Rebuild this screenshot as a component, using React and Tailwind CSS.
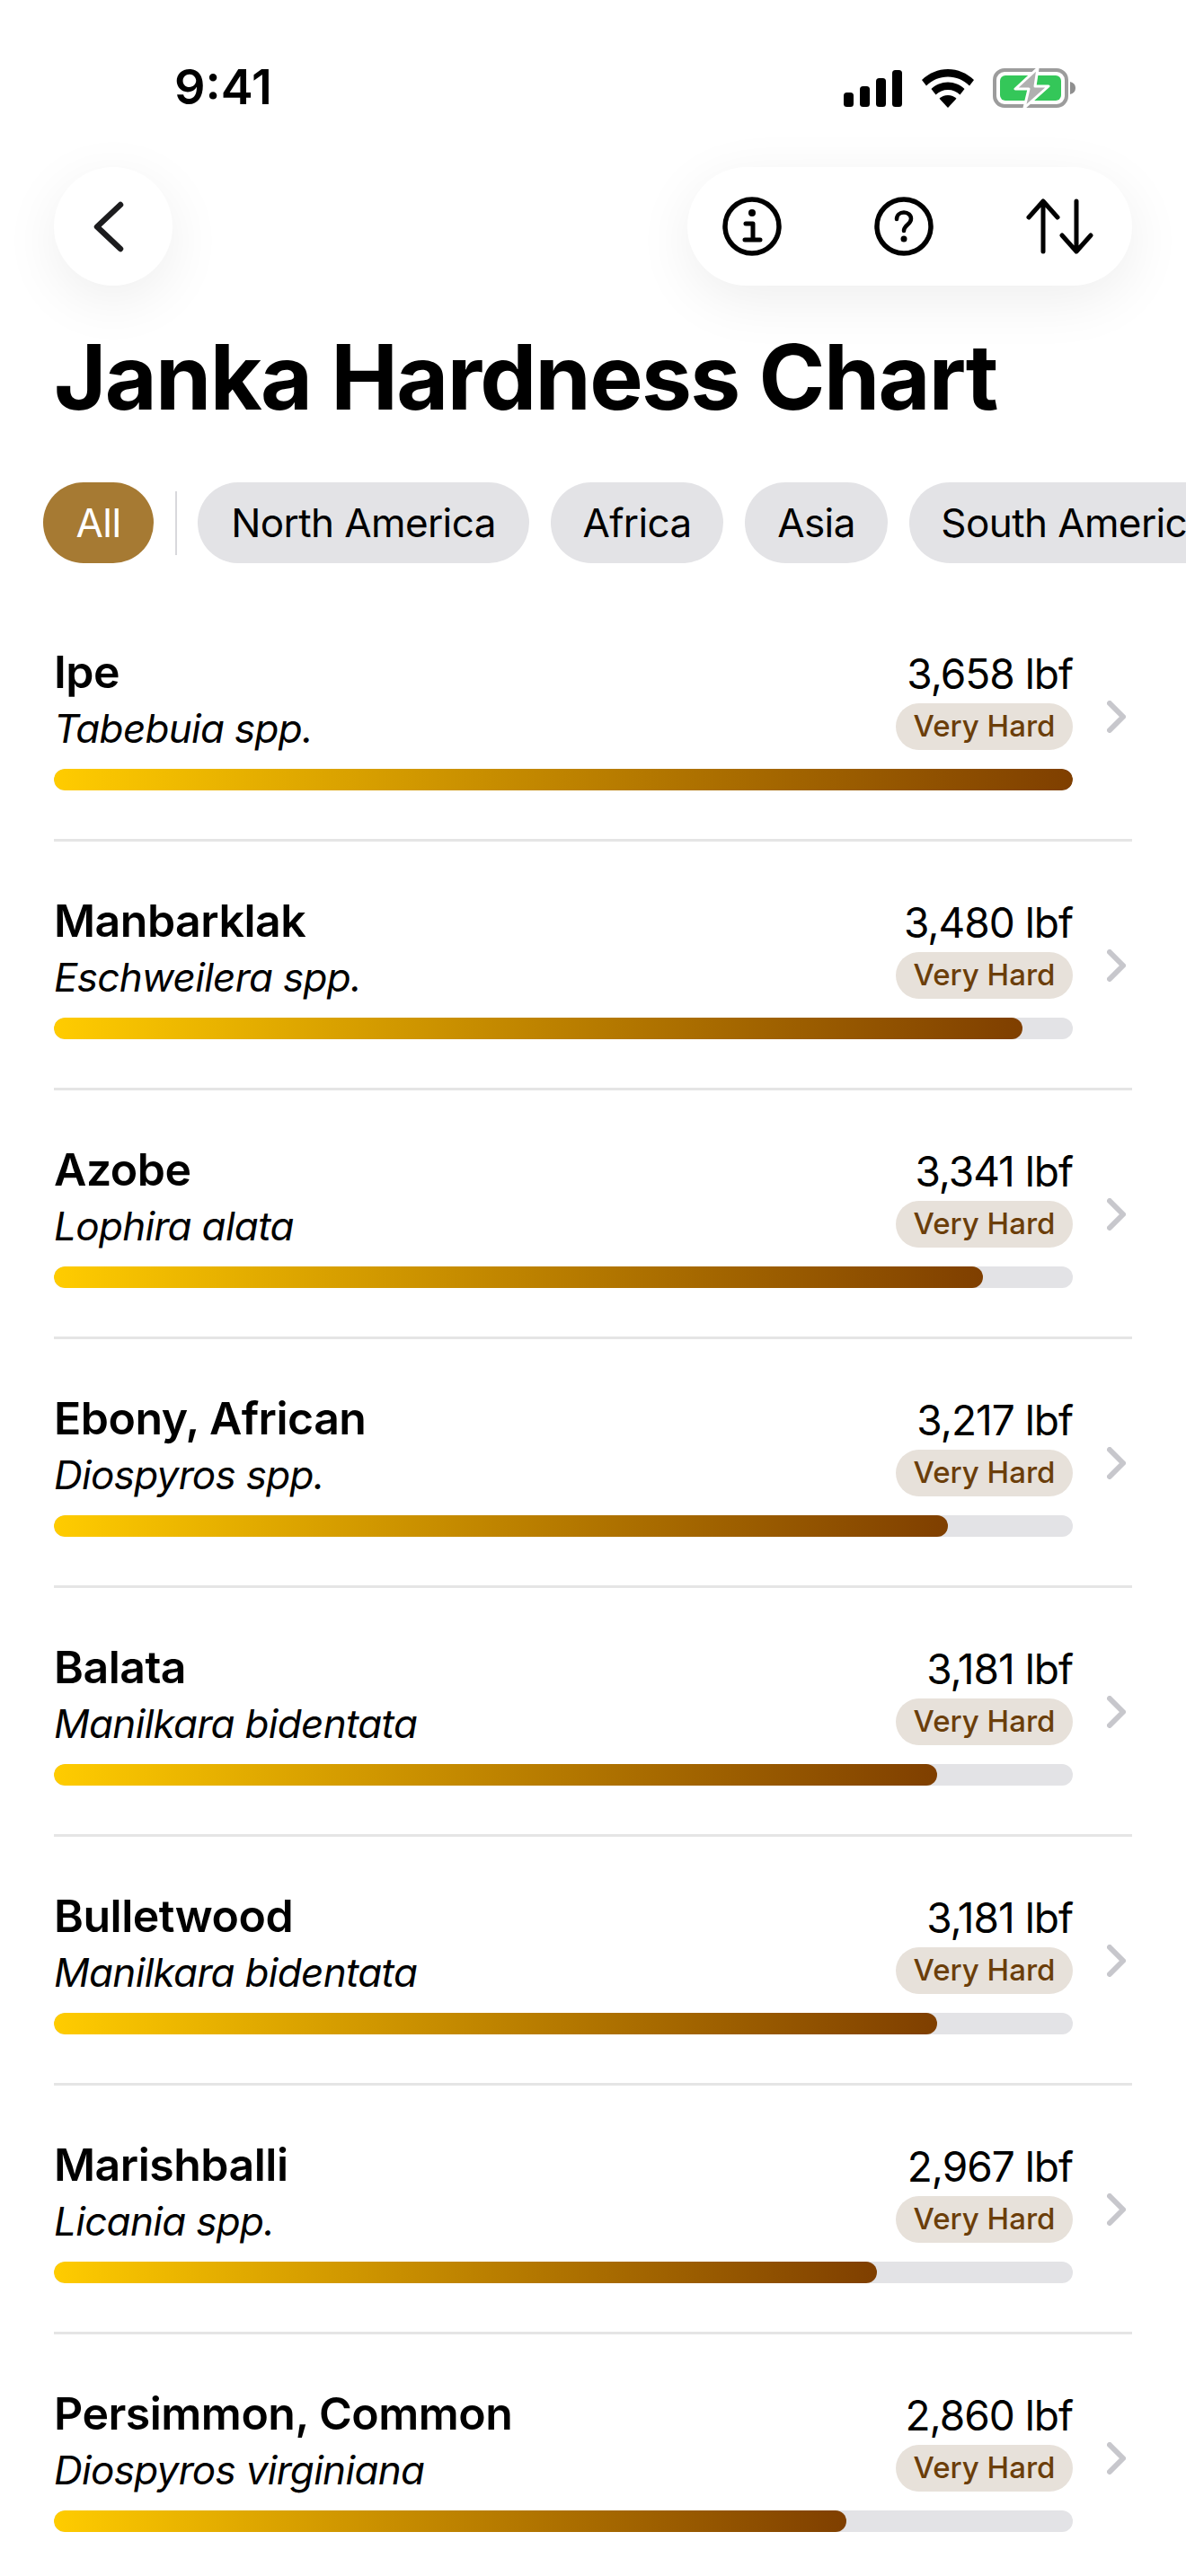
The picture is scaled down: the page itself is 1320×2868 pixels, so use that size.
import React from 'react';

const woods = [
    { name: 'Ipe', latin: 'Tabebuia spp.', lbf: 3658 },
    { name: 'Manbarklak', latin: 'Eschweilera spp.', lbf: 3480 },
    { name: 'Azobe', latin: 'Lophira alata', lbf: 3341 },
    { name: 'Ebony, African', latin: 'Diospyros spp.', lbf: 3217 },
    { name: 'Balata', latin: 'Manilkara bidentata', lbf: 3181 },
    { name: 'Bulletwood', latin: 'Manilkara bidentata', lbf: 3181 },
    { name: 'Marishballi', latin: 'Licania spp.', lbf: 2967 },
    { name: 'Persimmon, Common', latin: 'Diospyros virginiana', lbf: 2860 },
];

const regions = [
    { name: 'North America', width: 'w-[369px]' },
    { name: 'Africa', width: 'w-[192px]' },
    { name: 'Asia', width: 'w-[159px]' },
    { name: 'South America', width: 'w-[369px]' },
];

const StatusIcons = () => (
    <div className="flex items-center mt-[7px] gap-[22px]">
        <svg width="65" height="41" viewBox="0 0 65 41" fill="#000">
            <rect x="0" y="25" width="11" height="16" rx="3.5" />
            <rect x="18" y="18" width="11" height="23" rx="3.5" />
            <rect x="36" y="9" width="11" height="32" rx="3.5" />
            <rect x="54" y="0" width="11" height="41" rx="3.5" />
        </svg>
        <svg width="58" height="43" viewBox="0 0 58 43" fill="#000">
            <path d="M29 0C18 0 8 4.400 0 12l5 6.500C11.500 12 20 8.500 29 8.500S46.500 12 53 18.500l5-6.500C50 4.400 40 0 29 0z" />
            <path d="M29 14.500c-7 0-13.500 2.800-18.500 7.500l5 6.500c3.500-3.500 8.400-5.500 13.500-5.500s10 2 13.500 5.500l5-6.500C42.500 17.300 36 14.500 29 14.500z" />
            <path d="M29 29c-3.800 0-7.200 1.400-9.500 3.700L29 43l9.500-10.300C36.200 30.400 32.800 29 29 29z" />
        </svg>
        <svg width="93" height="46" viewBox="0 0 93 46" className="-ml-[1px]">
            <rect x="2" y="3" width="80" height="40" rx="11" fill="none" stroke="#9c9c9c" strokeWidth="4" />
            <rect x="8" y="9" width="68" height="28" rx="6" fill="#34c759" />
            <path d="M86 16c4 1 6 3.500 6 7s-2 6-6 7z" fill="#8f8f8f" />
            <path d="M50 1L25 24h15l-5 21 27-24H47z" fill="#b0b0b0" stroke="#fff" strokeWidth="3" strokeLinejoin="round" />
        </svg>
    </div>
);

const InfoIcon = () => (
    <svg width="66" height="66" viewBox="0 0 66 66" fill="none" stroke="#000" strokeWidth="5" strokeLinecap="round" strokeLinejoin="round">
        <circle cx="33" cy="33" r="30" strokeWidth="5.500" />
        <circle cx="33" cy="18" r="4" fill="#000" stroke="none" />
        <path d="M26 30h8v18M25 48h17" />
    </svg>
);

const HelpIcon = () => (
    <svg width="66" height="66" viewBox="0 0 66 66" fill="none" stroke="#000" strokeWidth="5" strokeLinecap="round" strokeLinejoin="round">
        <circle cx="33" cy="33" r="30" strokeWidth="5.500" />
        <path d="M25 25c0-4.500 3.500-7.500 8-7.500s8 3 8 7c0 6.500-8 7-8 13.500" strokeWidth="4.500" />
        <circle cx="33" cy="47" r="3.500" fill="#000" stroke="none" />
    </svg>
);

const SortIcon = () => (
    <svg width="76" height="62" viewBox="0 0 76 62" fill="none" stroke="#000" strokeWidth="5" strokeLinecap="round" strokeLinejoin="round">
        <path d="M19 3v56M3 21L19 3l16 18" />
        <path d="M56 3v56M40 41l16 18 16-18" />
    </svg>
);

const WoodRow = ({ wood }) => {
    const fill = ((wood.lbf - 67) / (3658 - 67)) * 100;
    return (
        <div className="flex items-center pt-[58px] pb-[54px] border-b-[3px] border-[#e5e5e5]">
            <div className="w-[1134px]">
                <div className="flex justify-between h-[117px]">
                    <div>
                        <p className="text-[50px] leading-[60px] font-semibold tracking-[-0.5px] text-black">{wood.name}</p>
                        <p className="mt-[5px] text-[44px] leading-[56px] italic tracking-[-0.7px] text-black">{wood.latin}</p>
                    </div>
                    <div className="flex flex-col items-end pt-[4px]">
                        <p className="text-[46px] leading-[56px] tracking-[-1px] text-black">{wood.lbf.toLocaleString('en-US')} lbf</p>
                        <span className="mt-[5px] h-[52px] w-[197px] flex items-center justify-center rounded-full bg-[#e7e1da] text-[33px] font-medium text-[#6b3e0a]">
                            Very Hard
                        </span>
                    </div>
                </div>
                <div className="mt-[21px] h-[24px] rounded-full bg-[#e3e3e6] overflow-hidden">
                    <div
                        className="h-full rounded-full bg-gradient-to-r from-[#ffcc00] to-[#7f3f00]"
                        style={{ width: `${fill}%` }}
                    />
                </div>
            </div>
            <svg width="21" height="36" viewBox="0 0 21 36" fill="none" stroke="#c7c7cc" strokeWidth="6" strokeLinecap="round" strokeLinejoin="round" className="ml-[38px] -mt-[2px]">
                <path d="M3 3l15 15L3 33" />
            </svg>
        </div>
    );
};

export default function App() {
    return (
        <div className="w-[1320px] h-[2868px] overflow-hidden bg-white font-['Inter',sans-serif]">
            <div className="flex items-start justify-between h-[186px] pt-[68px] pl-[194px] pr-[122px]">
                <span className="text-[54px] leading-[58px] font-semibold text-black">9:41</span>
                <StatusIcons />
            </div>

            <div className="flex items-center justify-between px-[60px]">
                <button className="w-[132px] h-[132px] flex items-center justify-center rounded-full bg-white shadow-[0_16px_64px_rgba(0,0,0,0.07)]">
                    <svg width="34" height="57" viewBox="0 0 34 57" fill="none" stroke="#1c1c1e" strokeWidth="6.500" strokeLinecap="round" strokeLinejoin="round" className="-ml-[10px]">
                        <path d="M30 4L4 28.500 30 53" />
                    </svg>
                </button>
                <div className="w-[495px] h-[132px] flex items-center justify-between pl-[39px] pr-[42px] rounded-full bg-white shadow-[0_16px_64px_rgba(0,0,0,0.07)]">
                    <InfoIcon />
                    <HelpIcon />
                    <SortIcon />
                </div>
            </div>

            <h1 className="mt-[42px] ml-[60px] text-[100px] leading-[120px] font-bold tracking-[-1.7px] text-black whitespace-nowrap">
                Janka Hardness Chart
            </h1>

            <div className="mt-[57px] flex items-center pl-[48px] overflow-hidden">
                <span className="shrink-0 h-[90px] w-[123px] flex items-center justify-center rounded-full bg-[#a67a33] text-white text-[44px] tracking-[-0.5px]">All</span>
                <span className="shrink-0 ml-[24px] mr-[23px] w-[2px] h-[71px] bg-[#d8d8dc]" />
                <div className="flex gap-[24px]">
                    {regions.map((region) => (
                        <span key={region.name} className={`${region.width} shrink-0 h-[90px] flex items-center justify-center rounded-full bg-[#e3e3e6] text-black text-[44px] tracking-[-0.6px] whitespace-nowrap`}>
                            {region.name}
                        </span>
                    ))}
                </div>
            </div>

            <div className="mt-[33px] px-[60px]">
                {woods.map((wood) => (
                    <WoodRow key={wood.name} wood={wood} />
                ))}
            </div>
        </div>
    );
}
